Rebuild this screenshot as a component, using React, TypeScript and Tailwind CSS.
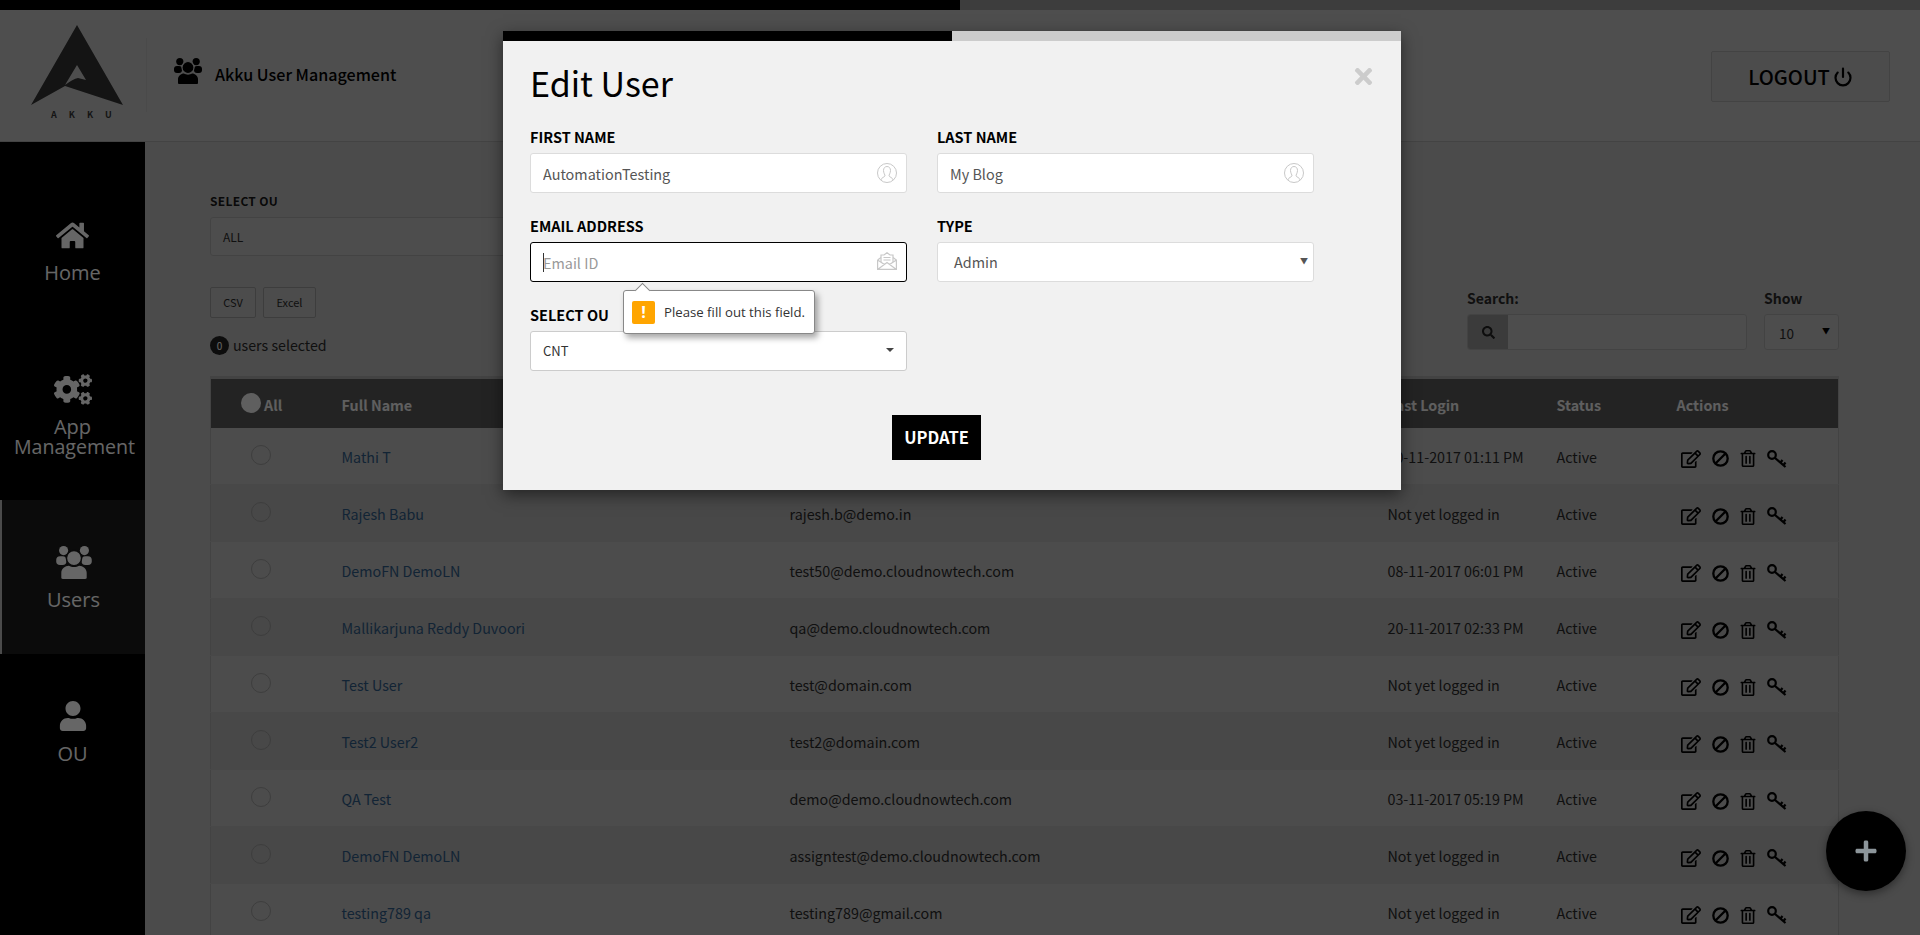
import { FaHome, FaCogs, FaUser, FaRegEdit, FaRegTrashAlt, FaSearch, FaPlus, FaTimes } from "react-icons/fa";
import { FiPower } from "react-icons/fi";

const rows = [
  ["Mathi T", "mathi@demo.cloudnowtech.com", "20-11-2017 01:11 PM"],
  ["Rajesh Babu", "rajesh.b@demo.in", "Not yet logged in"],
  ["DemoFN DemoLN", "test50@demo.cloudnowtech.com", "08-11-2017 06:01 PM"],
  ["Mallikarjuna Reddy Duvoori", "qa@demo.cloudnowtech.com", "20-11-2017 02:33 PM"],
  ["Test User", "test@domain.com", "Not yet logged in"],
  ["Test2 User2", "test2@domain.com", "Not yet logged in"],
  ["QA Test", "demo@demo.cloudnowtech.com", "03-11-2017 05:19 PM"],
  ["DemoFN DemoLN", "assigntest@demo.cloudnowtech.com", "Not yet logged in"],
  ["testing789 qa", "testing789@gmail.com", "Not yet logged in"],
];

function Logo() {
  return (
    <svg width="92" height="80" viewBox="0 0 92 80" className="block">
      <path d="M46 0 L92 80 L34 61 L0 80 Z" fill="#333" />
      <path d="M46 40 L34 60 Q42 54 47 53 L55 55 Z" fill="#c4c4c4" />
    </svg>
  );
}

function PeopleIcon({ w, h, fill, gap }: { w: number; h: number; fill: string; gap: string }) {
  return (
    <svg width={w} height={h} viewBox="0 0 28 26" className="block">
      <circle cx="5.8" cy="3.6" r="3.6" fill={fill} />
      <circle cx="22.2" cy="3.6" r="3.6" fill={fill} />
      <rect x="0" y="8" width="8" height="7" rx="3" fill={fill} />
      <rect x="20" y="8" width="8" height="7" rx="3" fill={fill} />
      <circle cx="14" cy="9.5" r="6" fill={fill} stroke={gap} strokeWidth="1.2" />
      <path d="M4 25 C4 26 5 26 6 26 L22 26 C23 26 24 26 24 25 L24 21 C24 18 21 15.5 18 15.5 C16 17 12 17 10 15.5 C7 15.5 4 18 4 21 Z" fill={fill} />
    </svg>
  );
}

function BanIcon() {
  return (
    <svg width="17" height="17" viewBox="0 0 17 17" fill="none" stroke="#000" strokeWidth="2.3" className="ml-[11px]">
      <circle cx="8.5" cy="8.5" r="7.2" />
      <path d="M13.5 3.5 L3.5 13.5" />
    </svg>
  );
}

function KeyIcon() {
  return (
    <svg width="20" height="18" viewBox="0 0 20 18" fill="none" stroke="#000" strokeWidth="2.2">
      <circle cx="5" cy="5" r="3.8" />
      <path d="M8 8 L18.5 17 M13.5 12.5 L15.5 10 M16.5 15 L18.5 12.5" />
    </svg>
  );
}

function UserCircle() {
  return (
    <svg width="20" height="20" viewBox="0 0 20 20" fill="none" stroke="#c8c8c8" strokeWidth="1">
      <circle cx="10" cy="10" r="9.5" />
      <path d="M3.8 17 C4.5 14.5 7.5 14 8 13 C8.2 12 6.5 10 6.5 7.5 C6.5 5 8 3.5 10 3.5 C12 3.5 13.5 5 13.5 7.5 C13.5 10 11.8 12 12 13 C12.5 14 15.5 14.5 16.2 17" />
    </svg>
  );
}

function MailOpen() {
  return (
    <svg width="20" height="18" viewBox="0 0 20 18" fill="none" stroke="#c8c8c8" strokeWidth="1.2">
      <path d="M0.6 8 L0.6 17.4 L19.4 17.4 L19.4 8 L16 5.5 M4 5.5 L0.6 8 M0.6 8 L7.5 12.5 M19.4 8 L12.5 12.5 M0.6 17.4 L10 10.5 L19.4 17.4" />
      <path d="M4 10 L4 3 L7 3 L10 0.7 L13 3 L16 3 L16 10 M6.5 5.5 L13.5 5.5 M6.5 8 L13.5 8" />
    </svg>
  );
}

function NavItem({ icon, label, active, tall }: { icon: React.ReactNode; label: React.ReactNode; active?: boolean; tall?: boolean }) {
  return (
    <div className={`${tall ? "h-[173px]" : "h-[154px]"} ${active ? "bg-[#1c1c1c] border-l-2 border-[#bbb]" : ""} flex flex-col items-center pt-[47px] text-white`}>
      <div className="h-[30px] flex items-center justify-center">{icon}</div>
      <div className="mt-[13px] text-center text-[20px] leading-[20px]">{label}</div>
    </div>
  );
}

function Field({ label, children }: { label: string; children: React.ReactNode }) {
  return (
    <div className="h-[66px] flex flex-col">
      <div className="h-[26px] text-[14.5px] leading-[20px] font-bold text-black">{label}</div>
      <div className="relative h-[40px]">{children}</div>
    </div>
  );
}

export default function App() {
  return (
    <div className="relative h-[935px] w-[1920px] overflow-hidden bg-[#bbbbbb] font-['Noto_Sans_CJK_SC','Liberation_Sans',sans-serif] text-[#2a2a2a]">
      <div className="h-[10px] bg-[#999] flex">
        <div className="w-[960px] bg-black" />
      </div>

      <header className="h-[132px] bg-[#c4c4c4] border-b border-[#a8a8a8] flex items-start">
        <div className="w-[146px] h-[131px] pl-[31px] pt-[15px] flex flex-col">
          <Logo />
          <div className="mt-[4px] pl-[20px] text-[9px] leading-[11px] font-bold tracking-[12px] text-[#333]">AKKU</div>
        </div>
        <div className="flex items-start">
          <div className="w-px h-[74px] mt-[28px] bg-[#b8b8b8]" />
          <div className="ml-[27px] mt-[48px]"><PeopleIcon w={28} h={26} fill="#000" gap="#c4c4c4" /></div>
          <div className="ml-[13px] mt-[52px] text-[16.1px] leading-[24px] font-medium text-black">Akku User Management</div>
        </div>
        <button className="ml-auto mr-[30px] mt-[41px] w-[179px] h-[51px] border border-[#a8a8a8] rounded-[2px] bg-[#bdbdbd] flex items-center justify-center text-[20px] font-medium text-black">
          LOGOUT<FiPower className="ml-[3px] w-[20px] h-[20px]" strokeWidth={2.6} />
        </button>
      </header>

      <div className="flex">
        <aside className="w-[145px] h-[793px] bg-black pt-[31px] font-['Open_Sans',sans-serif] shrink-0">
          <NavItem icon={<FaHome className="w-[33px] h-[33px]" />} label="Home" />
          <NavItem icon={<FaCogs className="w-[38px] h-[33px]" />} label={<>App<br /><span className="ml-[4px] text-[19.6px]">Management</span></>} tall />
          <NavItem icon={<PeopleIcon w={38} h={33} fill="#ffffff" gap="#1c1c1c" />} label="Users" active />
          <NavItem icon={<FaUser className="w-[30px] h-[30px]" />} label="OU" />
        </aside>

        <main className="flex-1 pl-[65px] pr-[82px] pt-[51px]">
          <div className="text-[12px] leading-[16px] font-bold text-black/90 tracking-[0.3px]">SELECT OU</div>
          <div className="mt-[8px] w-[600px] h-[39px] border border-[#a9a9a9] rounded-[3px] bg-[#c0c0c0] pl-[12px] flex items-center text-[12px]">ALL</div>

          <div className="flex justify-between mt-[31px] h-[89px]">
            <div>
              <div className="flex gap-[7px]">
                <div className="w-[46px] h-[31px] border border-[#999] bg-[#bdbdbd] rounded-[2px] flex items-center justify-center text-[11px]">CSV</div>
                <div className="w-[53px] h-[31px] border border-[#999] bg-[#bdbdbd] rounded-[2px] flex items-center justify-center text-[11px]">Excel</div>
              </div>
              <div className="mt-[17px] flex items-center text-[14.2px] leading-[20px]">
                <span className="w-[19px] h-[19px] rounded-full bg-[#222] text-white text-[10px] leading-[19px] text-center mr-[4px]">0</span>
                users selected
              </div>
            </div>
            <div className="flex items-end gap-[17px] pb-[26px]">
              <div className="w-[280px]">
                <div className="text-[14px] leading-[20px] font-bold mb-[6px]">Search:</div>
                <div className="h-[36px] border border-[#a9a9a9] rounded-[3px] bg-[#c0c0c0] flex overflow-hidden">
                  <div className="w-[40px] bg-[#959595] flex items-center justify-center text-[13px] text-[#222]"><FaSearch /></div>
                </div>
              </div>
              <div className="w-[75px]">
                <div className="text-[14px] leading-[20px] font-bold mb-[6px]">Show</div>
                <div className="h-[36px] border border-[#a9a9a9] rounded-[3px] bg-[#c0c0c0] pl-[14px] pr-[8px] flex items-center justify-between text-[13.5px]">
                  <span className="mt-[3px]">10</span><span className="text-[8px] text-black -mt-[3px]">▼</span>
                </div>
              </div>
            </div>
          </div>

          <table className="table-fixed w-[1628px] border-t-[3px] border-x border-[#a8a8a8] border-collapse text-[14.3px]">
            <colgroup>
              <col className="w-[131px]" />
              <col className="w-[448px]" />
              <col className="w-[598px]" />
              <col className="w-[169px]" />
              <col className="w-[120px]" />
              <col className="w-[162px]" />
            </colgroup>
            <thead>
              <tr className="h-[50px] bg-[#585858] text-left font-bold text-white/90 [&>th]:pt-[3px]">
                <th className="pl-[30px]">
                  <div className="flex items-center">
                    <span className="w-[20px] h-[20px] rounded-full bg-white/90 mr-[3px] -mt-[3px]" />All
                  </div>
                </th>
                <th>Full Name</th>
                <th>Email</th>
                <th>Last Login</th>
                <th>Status</th>
                <th>Actions</th>
              </tr>
            </thead>
            <tbody>
              {rows.map((r, i) => (
                <tr key={i} className={`h-[57px] border-b border-[#b3b3b3] [&>td]:pt-[2px] ${i % 2 ? "bg-[#b3b3b3]" : "bg-[#bdbdbd]"}`}>
                  <td className="pl-[30px]">
                    <span className="block ml-[10px] w-[20px] h-[20px] rounded-full border border-[#9a9a9a] -mt-[4px]" />
                  </td>
                  <td className="text-[#2f5a85]">{r[0]}</td>
                  <td>{r[1]}</td>
                  <td>{r[2]}</td>
                  <td>Active</td>
                  <td>
                    <div className="flex items-center pl-[4px] mt-[4px] text-black">
                      <FaRegEdit className="w-[20px] h-[18px]" />
                      <BanIcon />
                      <FaRegTrashAlt className="ml-[11px] w-[16px] h-[17px]" />
                      <span className="ml-[11px]"><KeyIcon /></span>
                    </div>
                  </td>
                </tr>
              ))}
            </tbody>
          </table>
        </main>
      </div>

      {/* backdrop */}
      <div className="absolute inset-0 bg-black/60 pl-[503px] pt-[31px]">
        <div className="relative w-[898px] h-[459px] bg-[#f1f1f1] shadow-[0_5px_15px_rgba(0,0,0,0.5)]">
          <div className="h-[10px] bg-[#cccccc]">
            <div className="w-1/2 h-full bg-black" />
          </div>
          <FaTimes className="absolute right-[25px] top-[33px] text-[#cccccc] w-[25px] h-[25px]" />
          <div className="pl-[27px]">
            <h2 className="h-[86px] pt-[20px] text-[34px] leading-[44px] text-black">Edit User</h2>
            <div className="grid grid-cols-[377px_377px] gap-x-[30px] gap-y-[23px]">
              <Field label="FIRST NAME">
                <input readOnly value="AutomationTesting" className="w-full h-full border border-[#dcdcdc] rounded-[3px] bg-white pl-[12px] pr-[40px] text-[14.4px] text-[#555] outline-none" />
                <span className="absolute right-[10px] top-[10px]"><UserCircle /></span>
              </Field>
              <Field label="LAST NAME">
                <input readOnly value="My Blog" className="w-full h-full border border-[#dcdcdc] rounded-[3px] bg-white pl-[12px] pr-[40px] text-[14.4px] text-[#555] outline-none" />
                <span className="absolute right-[10px] top-[10px]"><UserCircle /></span>
              </Field>
              <Field label="EMAIL ADDRESS">
                <input readOnly placeholder="Email ID" className="w-full h-full border border-black rounded-[3px] bg-white pl-[12px] pr-[40px] text-[14.4px] text-[#555] placeholder:text-[#999] outline-none" />
                <span className="absolute left-[13px] top-[11px] w-px h-[19px] bg-[#333]" />
                <span className="absolute right-[10px] top-[10px]"><MailOpen /></span>
              </Field>
              <Field label="TYPE">
                <div className="w-full h-full border border-[#dcdcdc] rounded-[3px] bg-white pl-[16px] flex items-center text-[14.4px] text-[#555]">Admin</div>
                <span className="absolute right-[6px] top-[13px] text-[8px] leading-[12px] text-[#555]">▼</span>
              </Field>
              <Field label="SELECT OU">
                <div className="w-full h-full border border-[#ccc] rounded-[3px] bg-white pl-[12px] flex items-center text-[13px] text-[#333]">CNT</div>
                <span className="absolute right-[13px] top-[17px] w-0 h-0 border-x-[4px] border-x-transparent border-t-[4px] border-t-[#444]" />
              </Field>
            </div>
            <button className="mt-[44px] ml-[362px] w-[89px] h-[45px] bg-black text-white text-[16.5px] font-bold">UPDATE</button>
          </div>

          {/* validation bubble */}
          <div className="absolute left-[120px] top-[259px] w-[192px] h-[44px] bg-white border border-[#888] rounded-[3px] shadow-[3px_4px_6px_rgba(0,0,0,0.35)] flex items-center pl-[8px] font-['Open_Sans',sans-serif]">
            <span className="absolute -top-[6px] left-[13px] w-[11px] h-[11px] bg-white border-l border-t border-[#888] rotate-45" />
            <span className="w-[23px] h-[23px] rounded-[2px] bg-[#ffa500] text-white font-bold text-[16px] leading-[23px] text-center">!</span>
            <span className="ml-[9px] mt-[2px] text-[13.2px] text-[#333] whitespace-nowrap">Please fill out this field.</span>
          </div>
        </div>
      </div>

      {/* floating add button */}
      <div className="absolute left-[1826px] top-[811px] w-[80px] h-[80px] rounded-full bg-black flex items-center justify-center text-[#8c959a] shadow-[0_3px_8px_rgba(0,0,0,0.4)]">
        <FaPlus className="w-[24px] h-[24px]" />
      </div>
    </div>
  );
}
